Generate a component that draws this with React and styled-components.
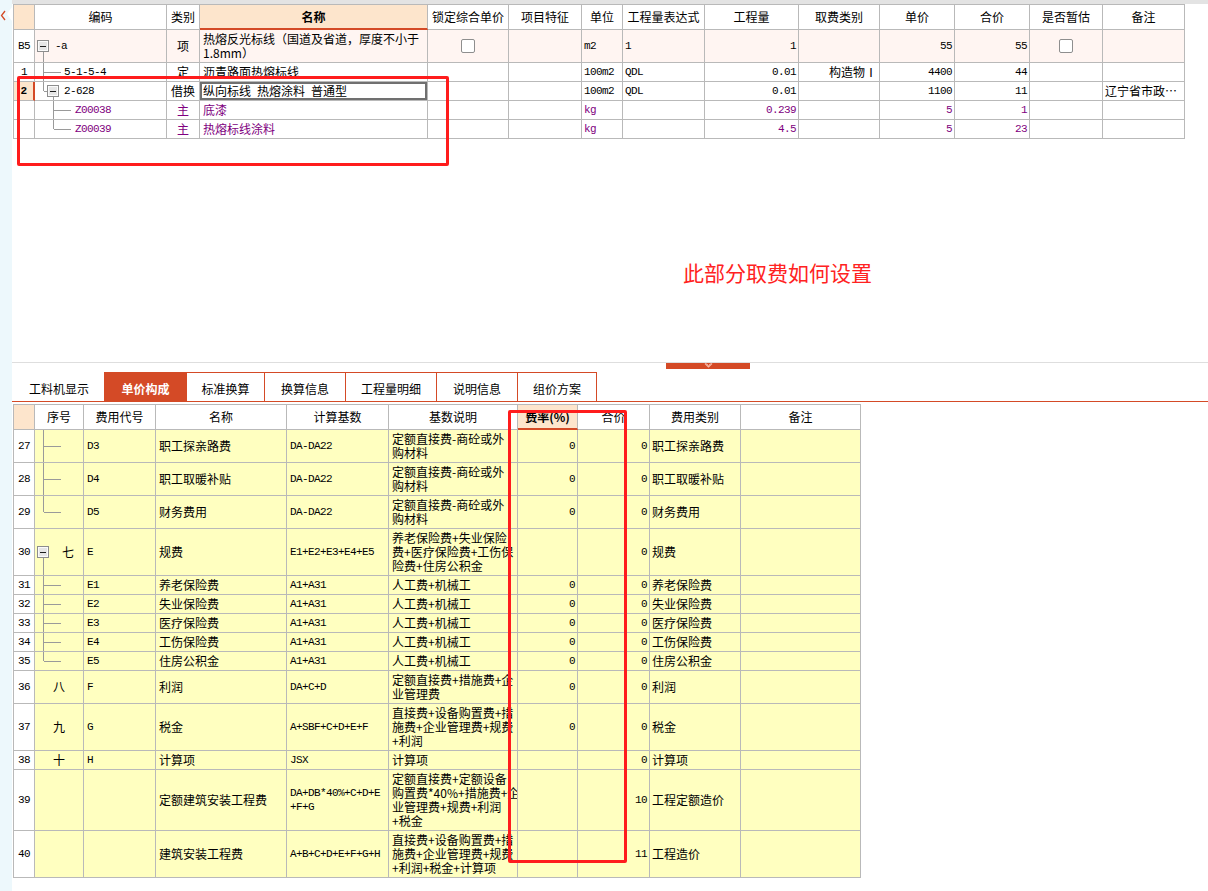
import React from 'react'
import styled, { createGlobalStyle } from 'styled-components'

const LINE = '#b9b9b9'
const ORANGE = '#d44a26'
const PEACH = '#fde5cc'
const YELLOW = '#ffffc0'
const PINK = '#fff5f2'
const PURPLE = '#800080'
const MARK = '#ff1c1c'
const CJK = '"Noto Sans CJK SC", "Noto Sans", sans-serif'
const MONO = '"Liberation Mono", "DejaVu Sans Mono", monospace'

const TOP_COLS = [21, 132, 33, 228, 81, 73, 41, 82, 94, 81, 75, 75, 73, 82]
const BOTTOM_COLS = [21, 49, 72, 131, 102, 129, 60, 72, 91, 120]
const toCols = (cols) => cols.map((w) => `${w}px`).join(' ')
const rowHeight = (lines) => lines * 14 + 5

const TREE_MID = { lines: [[8, 'top', 8, 'bot'], [8, 'mid', 25, 'mid']] }
const TREE_LAST = { lines: [[8, 'top', 8, 'mid'], [8, 'mid', 25, 'mid']] }
const TREE_OPEN = { lines: [[8, 'mid', 8, 'bot']], box: 2 }

const topRows = [
  {
    id: 'B5', lines: 2, bg: PINK, indent: 20, code: '-a', kind: '项',
    tree: { lines: [[8, 'mid', 8, 'bot']], box: 2 },
    name: ['热熔反光标线（国道及省道，厚度不小于', '1.8mm）'],
    lock: true, unit: 'm2', expr: '1', qty: '1', price: '55', total: '55', est: true,
  },
  {
    id: '1', lines: 1, indent: 29, code: '5-1-5-4', kind: '定', tree: TREE_MID,
    name: ['沥青路面热熔标线'], unit: '100m2', expr: 'QDL', qty: '0.01',
    fee: '构造物Ⅰ', price: '4400', total: '44',
  },
  {
    id: '2', lines: 1, selected: true, indent: 29, code: '2-628', kind: '借换',
    tree: { lines: [[8, 'top', 8, 'mid'], [8, 'mid', 12, 'mid'], [18, 'mid', 18, 'bot']], box: 12 },
    name: ['纵向标线\u2002热熔涂料\u2002普通型'], unit: '100m2', expr: 'QDL', qty: '0.01',
    price: '1100', total: '11', note: '辽宁省市政…',
  },
  {
    id: '', lines: 1, color: PURPLE, indent: 40, code: 'Z00038', kind: '主',
    tree: { lines: [[18, 'top', 18, 'bot'], [18, 'mid', 35, 'mid']] },
    name: ['底漆'], unit: 'kg', qty: '0.239', price: '5', total: '1',
  },
  {
    id: '', lines: 1, color: PURPLE, indent: 40, code: 'Z00039', kind: '主',
    tree: { lines: [[18, 'top', 18, 'mid'], [18, 'mid', 35, 'mid']] },
    name: ['热熔标线涂料'], unit: 'kg', qty: '4.5', price: '5', total: '23',
  },
]

const TOP_HEAD = ['编码', '类别', '名称', '锁定综合单价', '项目特征', '单位', '工程量表达式', '工程量', '取费类别', '单价', '合价', '是否暂估', '备注']
const BOTTOM_HEAD = ['序号', '费用代号', '名称', '计算基数', '基数说明', '费率(%)', '合价', '费用类别', '备注']

const DA_DESC = ['定额直接费-商砼或外', '购材料']
const E_DESC = ['人工费+机械工']

const feeRows = [
  { n: '27', seq: { tree: TREE_MID }, code: 'D3', name: '职工探亲路费', base: ['DA-DA22'], desc: DA_DESC, rate: '0', total: '0', type: '职工探亲路费' },
  { n: '28', seq: { tree: TREE_MID }, code: 'D4', name: '职工取暖补贴', base: ['DA-DA22'], desc: DA_DESC, rate: '0', total: '0', type: '职工取暖补贴' },
  { n: '29', seq: { tree: TREE_LAST }, code: 'D5', name: '财务费用', base: ['DA-DA22'], desc: DA_DESC, rate: '0', total: '0', type: '财务费用' },
  { n: '30', seq: { tree: TREE_OPEN, label: '七', indent: 27 }, code: 'E', name: '规费', base: ['E1+E2+E3+E4+E5'], desc: ['养老保险费+失业保险', '费+医疗保险费+工伤保', '险费+住房公积金'], rate: '', total: '0', type: '规费' },
  { n: '31', seq: { tree: TREE_MID }, code: 'E1', name: '养老保险费', base: ['A1+A31'], desc: E_DESC, rate: '0', total: '0', type: '养老保险费' },
  { n: '32', seq: { tree: TREE_MID }, code: 'E2', name: '失业保险费', base: ['A1+A31'], desc: E_DESC, rate: '0', total: '0', type: '失业保险费' },
  { n: '33', seq: { tree: TREE_MID }, code: 'E3', name: '医疗保险费', base: ['A1+A31'], desc: E_DESC, rate: '0', total: '0', type: '医疗保险费' },
  { n: '34', seq: { tree: TREE_MID }, code: 'E4', name: '工伤保险费', base: ['A1+A31'], desc: E_DESC, rate: '0', total: '0', type: '工伤保险费' },
  { n: '35', seq: { tree: TREE_LAST }, code: 'E5', name: '住房公积金', base: ['A1+A31'], desc: E_DESC, rate: '0', total: '0', type: '住房公积金' },
  { n: '36', seq: { label: '八' }, code: 'F', name: '利润', base: ['DA+C+D'], desc: ['定额直接费+措施费+企', '业管理费'], rate: '0', total: '0', type: '利润' },
  { n: '37', seq: { label: '九' }, code: 'G', name: '税金', base: ['A+SBF+C+D+E+F'], desc: ['直接费+设备购置费+措', '施费+企业管理费+规费', '+利润'], rate: '0', total: '0', type: '税金' },
  { n: '38', seq: { label: '十' }, code: 'H', name: '计算项', base: ['JSX'], desc: ['计算项'], rate: '', total: '0', type: '计算项' },
  { n: '39', seq: {}, code: '', name: '定额建筑安装工程费', base: ['DA+DB*40%+C+D+E', '+F+G'], desc: ['定额直接费+定额设备', '购置费*40%+措施费+企', '业管理费+规费+利润', '+税金'], rate: '', total: '10', type: '工程定额造价' },
  { n: '40', seq: {}, code: '', name: '建筑安装工程费', base: ['A+B+C+D+E+F+G+H'], desc: ['直接费+设备购置费+措', '施费+企业管理费+规费', '+利润+税金+计算项'], rate: '', total: '11', type: '工程造价' },
]

const tabs = [
  { label: '工料机显示', w: 91, plain: true },
  { label: '单价构成', w: 82, active: true },
  { label: '标准换算', w: 78 },
  { label: '换算信息', w: 81 },
  { label: '工程量明细', w: 91 },
  { label: '说明信息', w: 81 },
  { label: '组价方案', w: 80, last: true },
]

const Y = { top: '0', mid: '50%', bot: '100%' }

const Tree = ({ lines = [], box }) => (
  <TreeSvg>
    {lines.map(([x1, y1, x2, y2], i) => (
      <line key={i} x1={x1 + 0.5} y1={Y[y1]} x2={x2 + 0.5} y2={Y[y2]} />
    ))}
    {box !== undefined && (
      <svg x={box} y="50%" overflow="visible">
        <rect x="0.5" y="-5.5" width="11" height="11" fill="#e6e6e6" stroke="#8d8d8d" />
        <rect x="1.5" y="-4.5" width="9" height="9" fill="none" stroke="#fbfbfb" />
        <line x1="3" y1="0.5" x2="9" y2="0.5" stroke="#1e1e1e" />
      </svg>
    )}
  </TreeSvg>
)

const Lines = ({ lines }) => (
  <Text>
    {lines.map((l, i) => (
      <React.Fragment key={i}>
        {i > 0 && <br />}
        {l}
      </React.Fragment>
    ))}
  </Text>
)

const App = () => {
  return (
    <Page>
      <GlobalStyle />
      <LeftStrip>
        <svg width="12" height="24" viewBox="0 0 12 24">
          <polygon points="12,6 7,13 12,20" fill="#fff" />
          <polyline points="5,10 1.5,14.5 5,19" fill="none" stroke={ORANGE} strokeWidth="1.3" />
        </svg>
      </LeftStrip>

      <Main>
        <TopPane>
          <Grid>
            <Row $cols={toCols(TOP_COLS)} $h={25}>
              <NumCell $bg={PEACH} />
              {TOP_HEAD.map((h) => (
                <HeadCell key={h} $selected={h === '名称'}>
                  {h}
                </HeadCell>
              ))}
            </Row>
            {topRows.map((r, i) => (
              <Row key={i} $cols={toCols(TOP_COLS)} $h={rowHeight(r.lines)} $color={r.color}>
                <NumCell $selected={r.selected}>{r.id}</NumCell>
                <Cell $bg={r.bg} $mono $indent={r.indent}>
                  <Tree {...r.tree} />
                  <Text>{r.code}</Text>
                </Cell>
                <Cell $bg={r.bg} $align="center">{r.kind}</Cell>
                <Cell $bg={r.bg} $focus={r.selected}>
                  <Lines lines={r.name} />
                </Cell>
                <Cell $bg={r.bg} $align="center">{r.lock && <Check />}</Cell>
                <Cell $bg={r.bg} />
                <Cell $bg={r.bg} $mono $indent={2}>{r.unit}</Cell>
                <Cell $bg={r.bg} $mono $indent={2}>{r.expr}</Cell>
                <Cell $bg={r.bg} $mono $align="right">{r.qty}</Cell>
                <Cell $bg={r.bg} $align="right">{r.fee}</Cell>
                <Cell $bg={r.bg} $mono $align="right">{r.price}</Cell>
                <Cell $bg={r.bg} $mono $align="right">{r.total}</Cell>
                <Cell $bg={r.bg} $align="center">{r.est && <Check />}</Cell>
                <Cell $bg={r.bg} $indent={2}>{r.note}</Cell>
              </Row>
            ))}
          </Grid>
          <Note>此部分取费如何设置</Note>
        </TopPane>

        <Splitter>
          <Handle>
            <svg width="9" height="6" viewBox="0 0 9 6">
              <polyline points="1,0.5 4.5,4 8,0.5" fill="none" stroke="#f6b9a6" strokeWidth="1.2" />
              <polyline points="2.5,0.5 4.5,2.5 6.5,0.5" fill="none" stroke="#f6b9a6" strokeWidth="0.8" />
            </svg>
          </Handle>
        </Splitter>

        <TabBar>
          {tabs.map((t) => (
            <Tab key={t.label} $w={t.w} $active={t.active} $plain={t.plain} $last={t.last}>
              {t.label}
            </Tab>
          ))}
        </TabBar>

        <FeeGrid>
          <Row $cols={toCols(BOTTOM_COLS)} $h={25}>
            <NumCell $bg={PEACH} />
            {BOTTOM_HEAD.map((h) => (
              <HeadCell key={h} $selected={h === '费率(%)'}>
                {h}
              </HeadCell>
            ))}
          </Row>
          {feeRows.map((r) => {
            const lines = Math.max(r.desc.length, r.base.length)
            return (
              <Row key={r.n} $cols={toCols(BOTTOM_COLS)} $h={rowHeight(lines)}>
                <NumCell>{r.n}</NumCell>
                <Cell
                  $bg={YELLOW}
                  $align={r.seq.label && !r.seq.tree ? 'center' : 'left'}
                  $indent={r.seq.indent}
                >
                  {r.seq.tree && <Tree {...r.seq.tree} />}
                  {r.seq.label && <Text>{r.seq.label}</Text>}
                </Cell>
                <Cell $bg={YELLOW} $mono>{r.code}</Cell>
                <Cell $bg={YELLOW}>{r.name}</Cell>
                <Cell $bg={YELLOW} $mono>
                  <Lines lines={r.base} />
                </Cell>
                <Cell $bg={YELLOW}>
                  <Lines lines={r.desc} />
                </Cell>
                <Cell $bg={YELLOW} $mono $align="right">{r.rate}</Cell>
                <Cell $bg={YELLOW} $mono $align="right">{r.total}</Cell>
                <Cell $bg={YELLOW} $indent={2}>{r.type}</Cell>
                <Cell $bg={YELLOW} />
              </Row>
            )
          })}
        </FeeGrid>
      </Main>

      <Mark $x={17} $y={76} $w={432} $h={90} />
      <Mark $x={508} $y={410} $w={119} $h={453} />
    </Page>
  )
}

export default App

const GlobalStyle = createGlobalStyle`
  html, body {
    margin: 0;
    padding: 0;
    background: #fff;
  }
  body {
    font-family: ${CJK};
    font-size: 12px;
    color: #000;
  }
`

const Page = styled.div`
  position: relative;
  display: flex;
  width: 1208px;
  height: 891px;
  overflow: hidden;
  background: #fff;
`

const LeftStrip = styled.aside`
  flex: none;
  width: 12px;
  background: #edf8fc;
  svg {
    display: block;
    margin-top: 1px;
  }
`

const Main = styled.main`
  flex: 1;
  min-width: 0;
  display: flex;
  flex-direction: column;
`

const TopPane = styled.section`
  flex: none;
  height: 362px;
  box-sizing: border-box;
  border-top: 4px solid #e3e3e3;
  padding-left: 1px;
`

const Grid = styled.div`
  display: flex;
  flex-direction: column;
  width: max-content;
  border-left: 1px solid ${LINE};
  border-top: 1px solid ${LINE};
`

const FeeGrid = styled(Grid)`
  margin: 2px 0 0 1px;
`

const Row = styled.div`
  display: grid;
  grid-template-columns: ${(p) => p.$cols};
  height: ${(p) => p.$h}px;
  color: ${(p) => p.$color || '#000'};
`

const Cell = styled.div`
  position: relative;
  box-sizing: border-box;
  display: flex;
  align-items: center;
  justify-content: ${(p) => ({ left: 'flex-start', right: 'flex-end', center: 'center' })[p.$align || 'left']};
  padding: 0 ${(p) => (p.$align === 'right' ? 2 : 3)}px 0 ${(p) => p.$indent ?? 3}px;
  border-right: 1px solid ${LINE};
  border-bottom: 1px solid ${LINE};
  background: ${(p) => p.$bg || 'transparent'};
  box-shadow: ${(p) => (p.$focus ? 'inset 0 0 0 2px #707070' : 'none')};
  font-family: ${(p) => (p.$mono ? MONO : CJK)};
  font-size: ${(p) => (p.$mono ? '11px' : '12px')};
  letter-spacing: ${(p) => (p.$mono ? '-0.6px' : '0')};
  line-height: 14px;
  white-space: nowrap;
  overflow: hidden;
`

const HeadCell = styled(Cell)`
  justify-content: center;
  padding: 0 2px;
  font-family: ${CJK};
  font-size: 12px;
  letter-spacing: 0;
  font-weight: ${(p) => (p.$selected ? 700 : 400)};
  background: ${(p) => (p.$selected ? PEACH : '#fff')};
  border-bottom: ${(p) => (p.$selected ? `2px solid ${ORANGE}` : `1px solid ${LINE}`)};
`

const NumCell = styled.div`
  box-sizing: border-box;
  display: flex;
  align-items: center;
  justify-content: center;
  border-right: ${(p) => (p.$selected ? `2px solid ${ORANGE}` : `1px solid ${LINE}`)};
  border-bottom: 1px solid ${LINE};
  background: ${(p) => p.$bg || (p.$selected ? PEACH : '#fff')};
  color: #000;
  font-family: ${MONO};
  font-size: 11px;
  letter-spacing: -0.6px;
  font-weight: ${(p) => (p.$selected ? 700 : 400)};
`

const Text = styled.span`
  position: relative;
`

const TreeSvg = styled.svg`
  position: absolute;
  top: 0;
  left: 0;
  width: 100%;
  height: 100%;
  stroke: #9a9a9a;
  pointer-events: none;
  shape-rendering: crispEdges;
`

const Check = styled.span`
  display: block;
  width: 14px;
  height: 14px;
  box-sizing: border-box;
  border: 1px solid #8e8e8e;
  border-radius: 2px;
  background: #fff;
`

const Note = styled.p`
  margin: 121px 0 0 670px;
  font-family: ${CJK};
  font-size: 21px;
  line-height: 24px;
  color: #ff2222;
`

const Splitter = styled.div`
  flex: none;
  height: 10px;
  box-sizing: border-box;
  border-top: 1px solid #dedede;
`

const Handle = styled.div`
  display: flex;
  justify-content: center;
  margin-left: 654px;
  width: 84px;
  height: 6px;
  background: ${ORANGE};
  svg {
    display: block;
  }
`

const TabBar = styled.nav`
  flex: none;
  display: flex;
  height: 30px;
  box-sizing: border-box;
  padding-left: 1px;
  border-bottom: 1px solid ${ORANGE};
`

const Tab = styled.div`
  flex: none;
  width: ${(p) => p.$w}px;
  box-sizing: border-box;
  display: flex;
  align-items: center;
  justify-content: center;
  border: 1px solid ${(p) => (p.$plain ? 'transparent' : ORANGE)};
  border-bottom: none;
  border-right: ${(p) => (p.$last ? `1px solid ${ORANGE}` : 'none')};
  background: ${(p) => (p.$active ? ORANGE : 'transparent')};
  color: ${(p) => (p.$active ? '#fff' : '#000')};
  font-weight: ${(p) => (p.$active ? 700 : 400)};
  font-size: 12px;
  padding-top: 2px;
`

const Mark = styled.div`
  position: absolute;
  left: ${(p) => p.$x}px;
  top: ${(p) => p.$y}px;
  width: ${(p) => p.$w}px;
  height: ${(p) => p.$h}px;
  box-sizing: border-box;
  border: 3px solid ${MARK};
  border-radius: 2px;
  pointer-events: none;
`
